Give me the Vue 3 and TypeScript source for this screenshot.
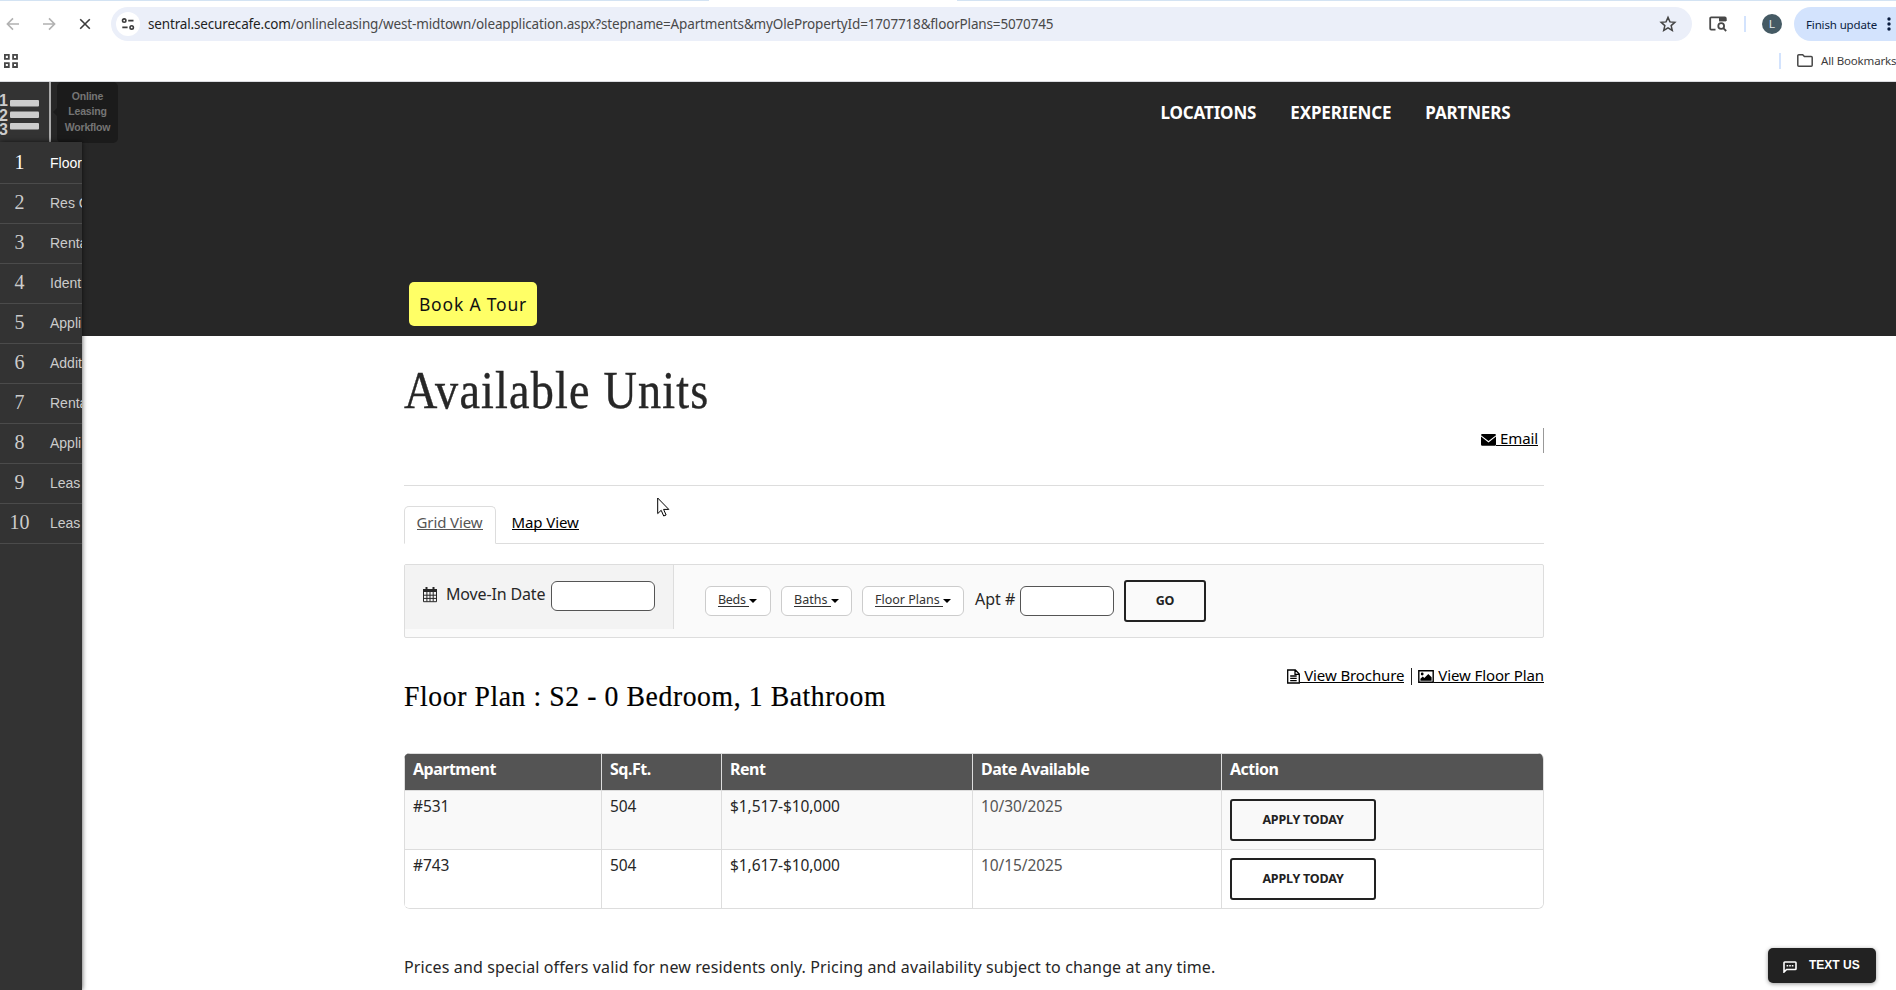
<script setup lang="ts">
interface Step {
  id: number
  label: string
}
interface Unit {
  apartment: string
  sqft: number
  rent: string
  available: string
}

const urlHost = 'sentral.securecafe.com'
const urlPath =
  '/onlineleasing/west-midtown/oleapplication.aspx?stepname=Apartments&myOlePropertyId=1707718&floorPlans=5070745'

const steps: Step[] = ['Floor', 'Res C', 'Renta', 'Ident', 'Appli', 'Addit', 'Renta', 'Appli', 'Leas', 'Leas'].map(
  (label, i) => ({ id: i + 1, label }),
)
const navLinks = ['LOCATIONS', 'EXPERIENCE', 'PARTNERS']
const filters = [
  { label: 'Beds', key: 'beds' },
  { label: 'Baths', key: 'baths' },
  { label: 'Floor Plans', key: 'plans' },
]
const columns = ['Apartment', 'Sq.Ft.', 'Rent', 'Date Available', 'Action']
const units: Unit[] = [
  { apartment: '#531', sqft: 504, rent: '$1,517-$10,000', available: '10/30/2025' },
  { apartment: '#743', sqft: 504, rent: '$1,617-$10,000', available: '10/15/2025' },
]
</script>

<template>
  <div class="window">
    <header class="chrome">
      <div class="tab-edge"><span class="edge-left"></span><span class="edge-right"></span></div>
      <div class="toolbar">
        <svg class="nav-icon back" viewBox="0 0 14 14"><path d="M13 7H1.6M7 1.4L1.4 7L7 12.6" /></svg>
        <svg class="nav-icon forward" viewBox="0 0 14 14"><path d="M1 7h11.4M7 1.4L12.6 7L7 12.6" /></svg>
        <svg class="nav-icon stop" viewBox="0 0 14 14"><path d="M2.2 2.2l9.6 9.6M11.8 2.2l-9.6 9.6" /></svg>
        <div class="omnibox">
          <span class="site-info">
            <svg viewBox="0 0 14 14">
              <circle cx="3.2" cy="3.6" r="1.7" /><path d="M7.2 3.6h5.3M1.3 10.4h5.3" /><circle cx="10.7" cy="10.4" r="1.7" />
            </svg>
          </span>
          <span class="url"><span class="host">{{ urlHost }}</span>{{ urlPath }}</span>
          <svg class="star" viewBox="0 0 24 24">
            <path d="M12 3.2l2.6 6 6.5.6-4.9 4.3 1.5 6.4L12 17.1l-5.7 3.4 1.5-6.4-4.9-4.3 6.5-.6z" />
          </svg>
        </div>
        <svg class="tab-search" viewBox="0 0 18 16">
          <path d="M6.5 13.6H2.2a1 1 0 0 1-1-1V2.4a1 1 0 0 1 1-1h13.6a1 1 0 0 1 1 1V5" />
          <path class="solid" d="M10 1h7v4.4h-7z" />
          <circle cx="12.2" cy="10" r="2.9" /><path d="M14.3 12.1l2.9 2.9" />
        </svg>
        <span class="separator"></span>
        <span class="avatar">L</span>
        <div class="update">
          <span>Finish update</span>
          <svg viewBox="0 0 4 16"><circle cx="2" cy="3" r="1.7" /><circle cx="2" cy="8" r="1.7" /><circle cx="2" cy="13" r="1.7" /></svg>
        </div>
      </div>
      <div class="bookmarks">
        <svg class="apps" viewBox="0 0 14 14">
          <path d="M.9.9h3.9v3.9H.9zM9.1.9H13v3.900H9.1zM.9 9.1h3.900V13H.9zM9.1 9.1H13V13H9.1z" />
        </svg>
        <span class="separator"></span>
        <svg class="folder" viewBox="0 0 16 13">
          <path d="M.8 11.2V1.8a1 1 0 0 1 1-1h3.900l1.7 1.8h6.8a1 1 0 0 1 1 1v7.6a1 1 0 0 1-1 1H1.8a1 1 0 0 1-1-1z" />
        </svg>
        <span class="all">All Bookmarks</span>
      </div>
    </header>

    <section class="site">
      <div class="hero">
        <nav><a v-for="l in navLinks" :key="l">{{ l }}</a></nav>
        <button class="book">Book A Tour</button>
      </div>

      <main>
        <h1><span>Available Units</span></h1>
        <div class="share">
          <a>
            <svg viewBox="0 0 15 12">
              <path d="M1.2 0h12.6A1.2 1.2 0 0 1 15 1.2L7.5 7 0 1.2A1.2 1.2 0 0 1 1.2 0zM0 2.6L7.5 8.4 15 2.6v7.9a1.2 1.2 0 0 1-1.2 1.2H1.2A1.2 1.2 0 0 1 0 10.5z" />
            </svg><u>&nbsp;Email</u>
          </a>
        </div>
        <hr />
        <div class="tabs">
          <a class="tab active"><u>Grid View</u></a>
          <a class="tab"><u>Map View</u></a>
        </div>

        <div class="filter">
          <div class="move-in">
            <svg viewBox="0 0 16 17">
              <path d="M1.5 3.5h13v12.2h-13z" class="frame" />
              <path d="M1 3h14v3H1z" />
              <path class="grid" d="M1.5 9.2h13M1.5 12.4h13M4.9 6v9.5M8 6v9.5M11.2 6v9.5" />
              <path class="ring" d="M4.5 1v3.2M11.5 1v3.2" />
            </svg>
            <label>Move-In Date</label>
            <input type="text" />
          </div>
          <div class="options">
            <button v-for="f in filters" :key="f.key" class="drop" :class="f.key">
              <u>{{ f.label }}&nbsp;</u><i></i>
            </button>
            <label>Apt #</label>
            <input type="text" />
            <button class="outline go">GO</button>
          </div>
        </div>

        <div class="plan">
          <h2><span>Floor Plan : S2 - 0 Bedroom, 1 Bathroom</span></h2>
          <div class="links">
            <a>
              <svg class="doc" viewBox="0 0 13 15">
                <path d="M.7 1h7.6l4 4v9H.7zM8 1v4.3h4.3M3.2 7h6.5M3.2 9.3h6.5M3.2 11.6h6.5" />
              </svg><u>&nbsp;View Brochure</u>
            </a>
            <span class="pipe"></span>
            <a>
              <svg class="img" viewBox="0 0 16 13">
                <path class="line" d="M.8.8h14.4v11.4H.8z" />
                <circle cx="4.2" cy="4" r="1.4" /><path d="M2.4 10.7V8.8l2.4-2.3 1.5 1.5 4-4 3.300 3.300v3.400z" />
              </svg><u>&nbsp;View Floor Plan</u>
            </a>
          </div>
        </div>

        <div class="table">
          <div class="row head"><div v-for="c in columns" :key="c">{{ c }}</div></div>
          <div v-for="u in units" :key="u.apartment" class="row">
            <div>{{ u.apartment }}</div>
            <div>{{ u.sqft }}</div>
            <div>{{ u.rent }}</div>
            <div class="date">{{ u.available }}</div>
            <div class="action"><button class="outline">APPLY TODAY</button></div>
          </div>
        </div>
        <p>Prices and special offers valid for new residents only. Pricing and availability subject to change at any time.</p>
      </main>

      <div class="workflow">
        <svg viewBox="0 0 42 44">
          <text x="-1" y="13">1</text><text x="-1" y="27.500">2</text><text x="-1" y="42">3</text>
          <rect x="10" y="7" width="29" height="6.5" rx="1" />
          <rect x="10" y="18.5" width="29" height="6.5" rx="1" />
          <rect x="10" y="30" width="29" height="6.5" rx="1" />
        </svg>
      </div>
      <div class="tip">Online<br />Leasing<br />Workflow</div>
      <aside>
        <div v-for="s in steps" :key="s.id" class="step" :class="{ current: s.id === 1 }">
          <b>{{ s.id }}</b><span>{{ s.label }}</span>
        </div>
      </aside>
    </section>

    <button class="text-us">
      <svg viewBox="0 0 14 12">
        <path d="M1 11V1.8A.8.8 0 0 1 1.8 1h10.4a.8.8 0 0 1 .8.8v5.9a.8.8 0 0 1-.8.8H3.6z" />
        <path class="dots" d="M3.6 4.8h7" />
      </svg>
      <span>TEXT US</span>
    </button>
    <svg class="pointer" viewBox="0 0 13 20">
      <path d="M.7 1v15.6l3.5-3.300 2.500 5.700 2.400-1-2.500-5.600h5.200z" />
    </svg>
  </div>
</template>

<style>
body { overflow: hidden; background: #fff; }
</style>

<style scoped>
* { box-sizing: border-box; }
.window { position: relative; width: 1896px; height: 990px; overflow: hidden; background: #fff; font-family: "Noto Sans", sans-serif; }
svg { display: block; flex: none; }
button { font-family: inherit; padding: 0; margin: 0; }
a, label, .url { white-space: nowrap; }
u { text-decoration: none; border-bottom: 1px solid currentColor; }

.chrome { height: 82px; border-bottom: 1px solid #dadce0; display: flex; flex-direction: column; }
.tab-edge { display: flex; justify-content: space-between; height: 1px; }
.tab-edge span { background: #d3e3f3; }
.edge-left { width: 709px; }
.edge-right { width: 939px; }
.toolbar { display: flex; align-items: center; height: 34px; margin-top: 6px; }
.toolbar > * { flex: none; }
.nav-icon { width: 14px; height: 14px; fill: none; stroke: #b1b1b1; stroke-width: 1.6; }
.back { margin-left: 6px; }
.forward { margin-left: 22px; }
.stop { margin-left: 22px; margin-right: 19px; stroke: #3c3c3c; }
.omnibox { display: flex; align-items: center; width: 1581px; height: 34px; border-radius: 17px; background: #ebeff9; padding-left: 5px; padding-right: 15px; }
.site-info { display: flex; align-items: center; justify-content: center; width: 24px; height: 24px; border-radius: 50%; background: #fff; }
.site-info svg { width: 14px; height: 14px; fill: none; stroke: #3c3c3c; stroke-width: 1.6; }
.url { flex: 1; margin-left: 8px; font-size: 13.5px; letter-spacing: -0.16px; line-height: 20px; color: #494949; }
.host { color: #1f1f1f; }
.star { width: 18px; height: 18px; fill: none; stroke: #444; stroke-width: 2; }
.tab-search { width: 18px; height: 16px; margin-left: 17px; fill: none; stroke: #474747; stroke-width: 1.8; }
.solid { fill: #474747; stroke: none; }
.separator { width: 2px; height: 16px; background: #d3e3fd; }
.toolbar .separator { margin-left: 17px; }
.avatar { width: 20px; height: 20px; margin-left: 16px; border-radius: 50%; background: #455a64; color: #e6eaec; font: 11px/20px "Liberation Sans", sans-serif; text-align: center; }
.update { display: flex; align-items: center; width: 120px; height: 34px; margin-left: 12px; padding-left: 12px; border-radius: 17px; background: #d3e3fd; color: #0b1d3f; font-size: 11.5px; letter-spacing: -0.14px; white-space: nowrap; }
.update svg { width: 4px; height: 16px; margin-left: 10px; fill: #0b1d3f; }
.bookmarks { display: flex; align-items: center; height: 39px; padding-left: 4px; }
.apps { width: 14px; height: 14px; fill: none; stroke: #474747; stroke-width: 1.8; }
.bookmarks .separator { margin-left: 1761px; flex: none; }
.folder { width: 16px; height: 13px; margin-left: 16px; fill: none; stroke: #474747; stroke-width: 1.5; }
.all { margin-left: 8px; font-size: 11.5px; letter-spacing: -0.15px; white-space: nowrap; color: #3c3c3c; }

.site { position: relative; height: 908px; }
.hero { height: 254px; background: #272727; padding-top: 19px; }
nav { display: flex; gap: 34px; padding-left: 1160.5px; height: 24px; line-height: 24px; font-size: 17px; font-weight: 700; letter-spacing: -0.15px; color: #fff; }
.book { display: block; width: 128px; height: 44px; margin: 157px 0 0 409px; border: 0; border-radius: 5px; background: #ff6; color: #111; font-size: 17.5px; letter-spacing: 0.8px; line-height: 42px; }

main { width: 1140px; margin-left: 404px; color: #272727; }
h1 { margin: 24px 0 0; height: 60px; font: 400 52px/61px "Liberation Serif", serif; letter-spacing: 1.3px; white-space: nowrap; -webkit-text-stroke: 0.4px #272727; }
h1 span { display: inline-block; transform: scaleX(0.889); transform-origin: 0 0; }
.share { display: flex; justify-content: flex-end; height: 25px; margin-top: 8px; padding-right: 5px; border-right: 1px solid #999; font-size: 15px; line-height: 20px; letter-spacing: -0.1px; color: #000; }
.share a, .links a { display: flex; }
.share svg { width: 15px; height: 12px; margin-top: 6px; }
.share u, .links u { height: 18px; }
hr { height: 1px; margin: 32px 0 0; border: 0; background: #ddd; }
.tabs { display: flex; height: 38px; margin-top: 20px; font-size: 15px; line-height: 30px; letter-spacing: -0.1px; color: #000; border-bottom: 1px solid #ddd; }
.tab { height: 38px; padding: 0 11.5px; border: 1px solid transparent; width: 92px; margin-right: 3px; }
.tab u { display: inline-block; height: 23px; }
.tab.active { border-color: #ddd; border-bottom-color: #fff; border-radius: 5px 5px 0 0; color: #555; background: #fff; }

.filter { display: flex; height: 74px; margin-top: 20px; border: 1px solid #ddd; border-radius: 2px; background: #fafafa; }
.filter label { font-size: 16px; line-height: 24px; }
.filter input { height: 30px; border: 1px solid #555; border-radius: 6px; background: #fff; padding: 0; }
.move-in { display: flex; width: 269px; height: 64px; padding: 16px 0 0 17px; background: #f3f3f3; border-right: 1px solid #ddd; }
.move-in svg { width: 16px; height: 17px; margin-top: 5px; fill: #272727; }
.frame, .grid { fill: none; stroke: #272727; stroke-width: 1; }
.ring { stroke: #272727; stroke-width: 2; }
.move-in label { width: 105px; margin: 1px 0 0 8px; letter-spacing: -0.15px; }
.move-in input { width: 104px; }
.options { display: flex; padding: 21px 0 0 31px; }
.drop { display: flex; height: 30px; margin-right: 10px; padding: 0 0 0 12px; border: 1px solid #ccc; border-radius: 6px; background: #fff; font-size: 12.5px; line-height: 26px; color: #333; }
.drop u { height: 20px; }
.drop i { width: 0; height: 0; margin-top: 12px; border: 4px solid transparent; border-top-color: #000; border-bottom: 0; }
.beds { width: 66px; letter-spacing: -0.3px; }
.baths { width: 71px; }
.plans { width: 102px; }
.options label { margin: 1px 0 0 1px; width: 45px; }
.options input { width: 94px; }
.outline { display: block; border: 2px solid #222; border-radius: 3px; background: transparent; color: #222; font-size: 12.5px; font-weight: 700; letter-spacing: -0.2px; line-height: 36px; height: 42px; }
.go { width: 82px; margin: -6px 0 0 10px; }

.plan { display: flex; justify-content: space-between; margin-top: 26px; height: 52px; color: #000; }
h2 { margin: 12px 0 0; width: 600px; font: 400 30px/40px "Liberation Serif", serif; letter-spacing: 0.65px; white-space: nowrap; -webkit-text-stroke: 0.2px #000; }
h2 span { display: inline-block; transform: scaleX(0.922); transform-origin: 0 0; }
.links { display: flex; margin-top: 1px; font-size: 15px; line-height: 20px; letter-spacing: -0.1px; }
.doc { width: 13px; height: 15px; margin-top: 4px; fill: none; stroke: #000; stroke-width: 1.3; }
.img { width: 16px; height: 13px; margin-top: 5px; }
.line { fill: none; stroke: #000; stroke-width: 1.4; }
.pipe { width: 1px; height: 17px; margin: 3px 6px 0 7px; background: #222; }

.table { margin-top: 37px; border: solid #ddd; border-width: 0 1px 1px 0; border-radius: 6px; overflow: hidden; }
.row { display: grid; grid-template-columns: 197px 120px 251px 249px 1fr; height: 59px; background: #fff; font-size: 15.5px; letter-spacing: -0.08px; line-height: 30px; }
.row:nth-child(2) { background: #f9f9f9; }
.row > div { border: solid #ddd; border-width: 1px 0 0 1px; padding-left: 8px; }
.head { height: 37px; background: #545454; color: #fff; font-size: 16px; font-weight: 700; letter-spacing: -0.5px; }
.row > .date { color: #555; }
.action { padding-top: 8px; }
.action .outline { width: 146px; }
p { margin: 46px 0 0; font-size: 16px; line-height: 24px; letter-spacing: 0.125px; white-space: nowrap; }

.workflow { position: absolute; left: 0; top: 0; width: 51px; height: 60px; background: #333; border-right: 2px solid #aaa; }
.workflow svg { width: 42px; height: 44px; margin-top: 11px; fill: #ccc; overflow: hidden; }
.workflow text { font: 700 16px "Liberation Sans", sans-serif; }
.tip { position: absolute; left: 57px; top: 0; width: 61px; height: 61px; padding-top: 7px; border-radius: 5px; background: #1b1b1b; color: #757575; font: 700 10.5px/15.4px "Liberation Sans", sans-serif; letter-spacing: -0.2px; text-align: center; }
.tip::before { content: ""; position: absolute; left: -4px; top: 26px; border: 4px solid transparent; border-right-color: #1b1b1b; border-left: 0; }
aside { position: absolute; left: 0; top: 60px; width: 82px; height: 848px; background: #333; box-shadow: 0 0 5px rgba(0, 0, 0, 0.7); padding-top: 2px; }
.step { display: flex; height: 40px; overflow: hidden; border-bottom: 1px solid #4b4b4b; color: #ccc; white-space: nowrap; }
.step b { flex: none; width: 39px; font: 400 20px/36px "Liberation Serif", serif; text-align: center; }
.step span { flex: none; margin-left: 11px; font: 14px/38px "Liberation Sans", sans-serif; }
.current { color: #fff; }

.text-us { position: absolute; left: 1768px; top: 948px; display: flex; align-items: center; width: 108px; height: 35px; padding-left: 15px; border: 0; border-radius: 5px; background: #222; box-shadow: 0 1px 4px rgba(0, 0, 0, 0.4); color: #fff; font: 700 12px/35px "Liberation Sans", sans-serif; }
.text-us svg { width: 14px; height: 12px; margin-top: 3px; fill: none; stroke: #fff; stroke-width: 1.6; }
.dots { stroke-dasharray: 1.6 1; }
.text-us span { margin-left: 12px; }
.pointer { position: absolute; left: 657px; top: 497px; width: 13px; height: 20px; fill: #fff; stroke: #000; stroke-width: 1; }
</style>
